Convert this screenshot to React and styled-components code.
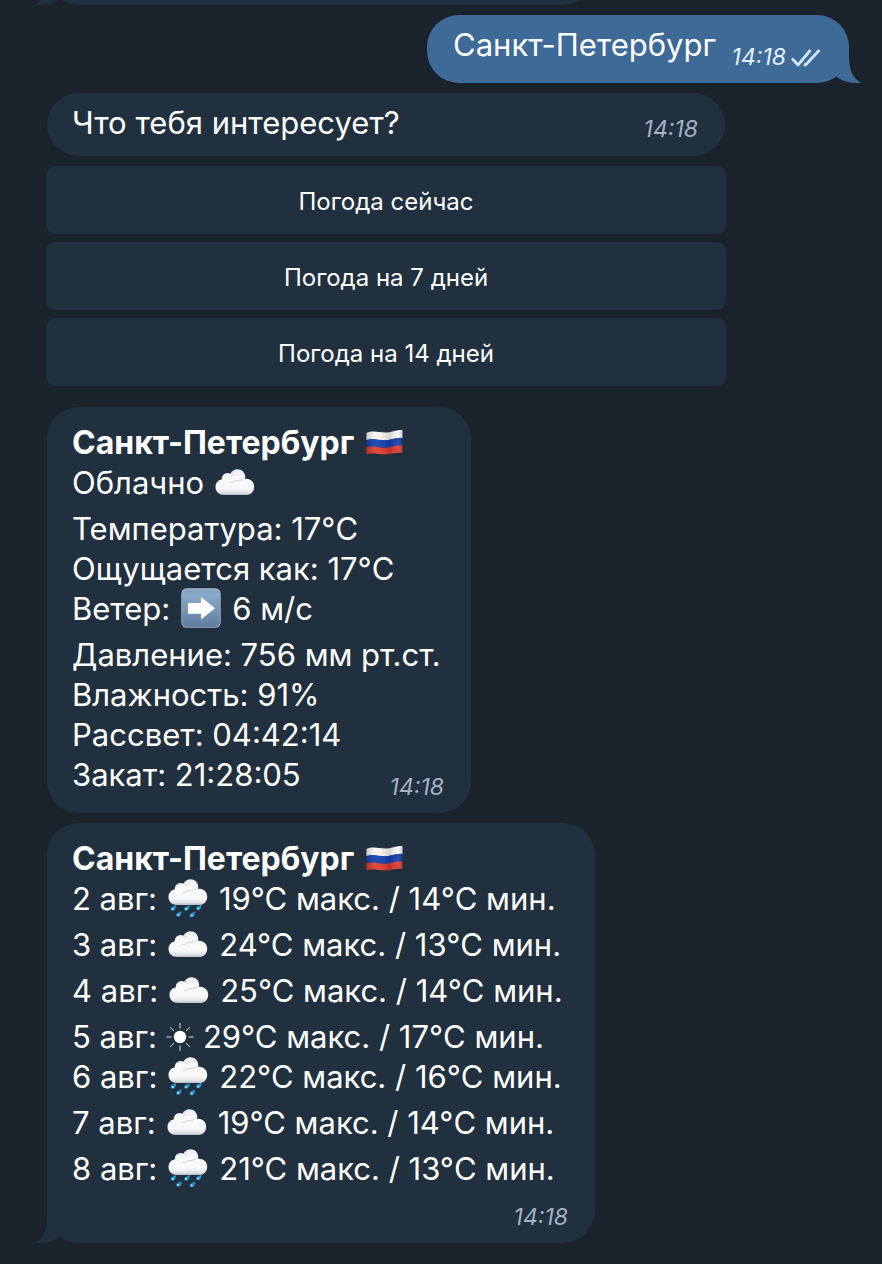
import React, { useId } from "react";
import styled, { createGlobalStyle, css } from "styled-components";

const colors = {
  page: "#1a222c",
  incoming: "#20303f",
  outgoing: "#3e6a97",
  text: "#ffffff",
  muted: "#a3b3c3",
  ticks: "#cfe6fb",
};

const GlobalStyle = createGlobalStyle`
  * { box-sizing: border-box; }
  body {
    margin: 0;
    background: ${colors.page};
    color: ${colors.text};
    font-family: Inter, "Noto Sans", sans-serif;
    overflow-x: hidden;
  }
`;

const Chat = styled.main`
  display: flex;
  flex-direction: column;
  align-items: flex-start;
  gap: 10px;
  padding: 0 33px 21px 47px;
  overflow: hidden;
`;

const Bubble = styled.article`
  position: relative;
  display: flex;
  justify-content: space-between;
  align-items: flex-end;
  width: 100%;
  max-width: ${(p) => p.$width}px;
  padding: 10px 27px 13px 25px;
  border-radius: 32px;
  background: ${colors.incoming};
  ${(p) =>
    p.$outgoing &&
    css`
      align-self: flex-end;
      padding: 10px 28px 18px 26px;
      background: ${colors.outgoing};
    `}
  ${(p) =>
    p.$card &&
    css`
      flex-direction: column;
      padding-top: 16px;
      padding-bottom: 18px;
    `}
  ${(p) =>
    p.$stacked &&
    css`
      padding-bottom: 12px;
    `}
`;

const EarlierBubble = styled(Bubble)`
  height: 64px;
  margin-top: -59px;
`;

const Lines = styled.div`
  display: flex;
  flex-direction: column;
  width: 100%;
`;

const Line = styled.p`
  display: flex;
  gap: ${(p) => (p.$tight ? "9px" : "11px")};
  height: ${(p) => (p.$tall ? "46px" : "40px")};
  margin: 0;
  font-size: 31px;
  line-height: 40px;
  white-space: nowrap;
`;

const LastLine = styled(Line)`
  justify-content: space-between;
  align-items: flex-end;
`;

const Title = styled(Line).attrs({ as: "h2" })`
  font-size: 32px;
  font-weight: 700;
`;

const Meta = styled.span`
  display: flex;
  align-items: center;
  gap: 5px;
  height: 28px;
  flex: none;
  color: ${(p) => (p.$outgoing ? "#e4f1fd" : colors.muted)};
  ${(p) => p.$lowered && "margin-bottom: -6px;"}
`;

const Time = styled.time`
  font-size: 23px;
  font-style: italic;
  line-height: 28px;
`;

const StackedMeta = styled(Meta)`
  margin-top: 8px;
`;

const Keyboard = styled.div`
  display: flex;
  flex-direction: column;
  gap: 8px;
  width: 100%;
  max-width: 680px;
  margin: 0 0 11px -1px;
`;

const KeyboardButton = styled.button`
  height: 68px;
  padding: 4px 16px 0;
  border: 0;
  border-radius: 9px;
  background: ${colors.incoming};
  color: ${colors.text};
  font-family: inherit;
  font-size: 24px;
  line-height: 32px;
  cursor: pointer;
`;

const TailShape = styled.svg`
  position: absolute;
  bottom: 0;
  width: 32px;
  height: 36px;
  fill: ${(p) => (p.$outgoing ? colors.outgoing : colors.incoming)};
  ${(p) => (p.$outgoing ? "right: -13px;" : "left: -13px; transform: scaleX(-1);")}
`;

const Emoji = styled.svg`
  flex: none;
  width: ${(p) => (p.$small ? "28px" : "40px")};
  height: 40px;
  overflow: visible;
`;

function Tail({ outgoing }) {
  return (
    <TailShape $outgoing={outgoing} viewBox="0 -9 32 36" aria-hidden="true">
      <path d="M19 -9V2C19 14 23 22 31 27C20 27.500 11 25 6 20L6 -9Z" />
    </TailShape>
  );
}

function Ticks() {
  return (
    <svg width="30" height="20" viewBox="0 0 30 20" fill="none" stroke={colors.ticks} strokeWidth="2.8" role="img" aria-label="Прочитано">
      <path d="M1 11.500L7 18L19.500 3M13 17L14.500 18L28.500 3" strokeLinejoin="round" />
    </svg>
  );
}

function CloudShape({ id }) {
  return (
    <>
      <defs>
        <linearGradient id={id} x1="0" y1="0" x2="0" y2="1">
          <stop offset="0" stopColor="#e9ebee" />
          <stop offset="0.3" stopColor="#f8f9fa" />
          <stop offset="0.75" stopColor="#f7f8f9" />
          <stop offset="0.92" stopColor="#dde0e4" />
          <stop offset="1" stopColor="#b4bac3" />
        </linearGradient>
      </defs>
      <path
        fill={`url(#${id})`}
        d="M9 26C4 26 0.500 22.500 0.500 18C0.500 14 3 11 6.800 10.500C6.500 7 9 4 12.500 4C13.700 4 14.700 4.300 15.500 4.800C16.800 1.800 19.500 0.200 22.500 0.200C26.800 0.200 30 3.400 30.200 7.500C30.200 8.300 30.100 9 30 9.800C35.500 9 39.200 13 39.200 17.700C39.200 22.500 35.800 26 31 26Z"
      />
      <path d="M15.500 4.800C17.500 5.200 18.500 6 19.200 7.200M15 13.500C17 14.200 18.500 11.800 21 11.500C24.500 12 28 10.500 29.500 8" fill="none" stroke="#cfd3d9" strokeWidth="1" />
    </>
  );
}

function Cloud() {
  const id = useId();
  return (
    <Emoji viewBox="0 0 40 40" role="img" aria-label="Облачно">
      <g transform="translate(0 6)">
        <CloudShape id={id} />
      </g>
    </Emoji>
  );
}

function Rain() {
  const id = useId();
  const drops = [
    [5, 29.5],
    [18.5, 29.5],
    [30.5, 29],
    [10.5, 35.5],
    [24, 36],
  ];
  return (
    <Emoji viewBox="0 0 40 40" role="img" aria-label="Дождь">
      <CloudShape id={id} />
      {drops.map(([x, y]) => (
        <g key={`${x}-${y}`} transform={`translate(${x} ${y})`}>
          <path d="M3 -3.500C3.200 -1 2.200 2.200 -0.400 2.200C-2.600 2.200 -3 0.200 -1.400 -1.200Z" fill="#1f93cb" />
          <circle cx="-0.300" cy="0.500" r="1" fill="#a5e6ff" />
        </g>
      ))}
    </Emoji>
  );
}

function Sun() {
  return (
    <Emoji $small viewBox="0 0 28 40" role="img" aria-label="Солнечно">
      <circle cx="14" cy="20" r="6.200" fill="#fff" />
      <path
        d="M14 6V11.500M14 28.500V34M0.500 20H5.500M22.500 20H27.500M4 10L8 14M20 26L24 30M4 30L8 26M20 14L24 10"
        stroke="#d5dbe1"
        strokeWidth="1"
      />
    </Emoji>
  );
}

function Arrow() {
  const id = useId();
  return (
    <Emoji viewBox="0 0 40 40" role="img" aria-label="Западный">
      <defs>
        <linearGradient id={id} x1="0" y1="0" x2="0" y2="1">
          <stop offset="0" stopColor="#7f9dba" />
          <stop offset="0.12" stopColor="#8aabca" />
          <stop offset="1" stopColor="#607e9f" />
        </linearGradient>
      </defs>
      <rect x="0.300" y="-0.800" width="39.400" height="39.600" rx="5.500" fill="#9fb8cf" />
      <rect x="1.200" y="0.800" width="37.600" height="37.200" rx="4.500" fill={`url(#${id})`} />
      <path d="M7 14H20V8L34 19.200L20 30.500V24.700H7Z" fill="#fff" />
    </Emoji>
  );
}

function Flag() {
  const id = useId();
  return (
    <Emoji viewBox="0 0 40 40" role="img" aria-label="Россия">
      <defs>
        <linearGradient id={id} x1="0" y1="0" x2="1" y2="0">
          <stop offset="0" stopColor="#000" stopOpacity="0.18" />
          <stop offset="0.3" stopColor="#fff" stopOpacity="0.08" />
          <stop offset="0.65" stopColor="#000" stopOpacity="0.14" />
          <stop offset="0.88" stopColor="#fff" stopOpacity="0.08" />
          <stop offset="1" stopColor="#000" stopOpacity="0.2" />
        </linearGradient>
      </defs>
      <path d="M1.500 10C8 7 14 9.500 20 9.500C27 9.500 31 6.500 37.500 7V15.500C31 14.500 26 17.500 20 17.500C14 17.500 8 15 1.500 17Z" fill="#f7f7f7" />
      <path d="M1.500 17C8 14.500 14 17.200 20 17.200C27 17.200 31 14 37.500 15V23C31 22 26 25 20 25C14 25 8 22.500 1.500 24.500Z" fill="#0f3fae" />
      <path d="M1.500 24.500C8 22 14 24.800 20 24.800C27 24.800 31 21.500 37.500 22.500V30C31 29 26 31.500 20 31.500C14 31.500 8 29 1.500 31Z" fill="#df3b2c" />
      <path d="M1.500 10C8 7 14 9.500 20 9.500C27 9.500 31 6.500 37.500 7V30C31 29 26 31.500 20 31.500C14 31.500 8 29 1.500 31Z" fill={`url(#${id})`} />
    </Emoji>
  );
}

const options = ["Погода сейчас", "Погода на 7 дней", "Погода на 14 дней"];

const forecast = [
  { day: "2 авг:", Icon: Rain, text: "19°C макс. / 14°C мин." },
  { day: "3 авг:", Icon: Cloud, text: "24°C макс. / 13°C мин." },
  { day: "4 авг:", Icon: Cloud, text: "25°C макс. / 14°C мин." },
  { day: "5 авг:", Icon: Sun, text: "29°C макс. / 17°C мин.", sunny: true },
  { day: "6 авг:", Icon: Rain, text: "22°C макс. / 16°C мин." },
  { day: "7 авг:", Icon: Cloud, text: "19°C макс. / 14°C мин." },
  { day: "8 авг:", Icon: Rain, text: "21°C макс. / 13°C мин." },
];

export default function App() {
  return (
    <>
      <GlobalStyle />
      <Chat>
        <EarlierBubble $width={548}>
          <Tail />
        </EarlierBubble>

        <Bubble $outgoing $width={422}>
          <Line>Санкт-Петербург</Line>
          <Meta $outgoing $lowered>
            <Time>14:18</Time>
            <Ticks />
          </Meta>
          <Tail outgoing />
        </Bubble>

        <Bubble $width={678}>
          <Line>Что тебя интересует?</Line>
          <Meta>
            <Time>14:18</Time>
          </Meta>
        </Bubble>

        <Keyboard>
          {options.map((label) => (
            <KeyboardButton key={label} type="button">
              {label}
            </KeyboardButton>
          ))}
        </Keyboard>

        <Bubble $card $width={424}>
          <Lines>
            <Title>
              Санкт-Петербург <Flag />
            </Title>
            <Line $tall>
              Облачно <Cloud />
            </Line>
            <Line>Температура: 17°C</Line>
            <Line>Ощущается как: 17°C</Line>
            <Line $tall>
              Ветер: <Arrow /> 6 м/с
            </Line>
            <Line>Давление: 756 мм рт.ст.</Line>
            <Line>Влажность: 91%</Line>
            <Line>Рассвет: 04:42:14</Line>
            <LastLine>
              Закат: 21:28:05
              <Meta $lowered>
                <Time>14:18</Time>
              </Meta>
            </LastLine>
          </Lines>
        </Bubble>

        <Bubble $card $stacked $width={548}>
          <Lines>
            <Title>
              Санкт-Петербург <Flag />
            </Title>
            {forecast.map(({ day, Icon, text, sunny }) => (
              <Line key={day} $tall={!sunny} $tight={sunny}>
                {day} <Icon /> {text}
              </Line>
            ))}
          </Lines>
          <StackedMeta>
            <Time>14:18</Time>
          </StackedMeta>
          <Tail />
        </Bubble>
      </Chat>
    </>
  );
}
